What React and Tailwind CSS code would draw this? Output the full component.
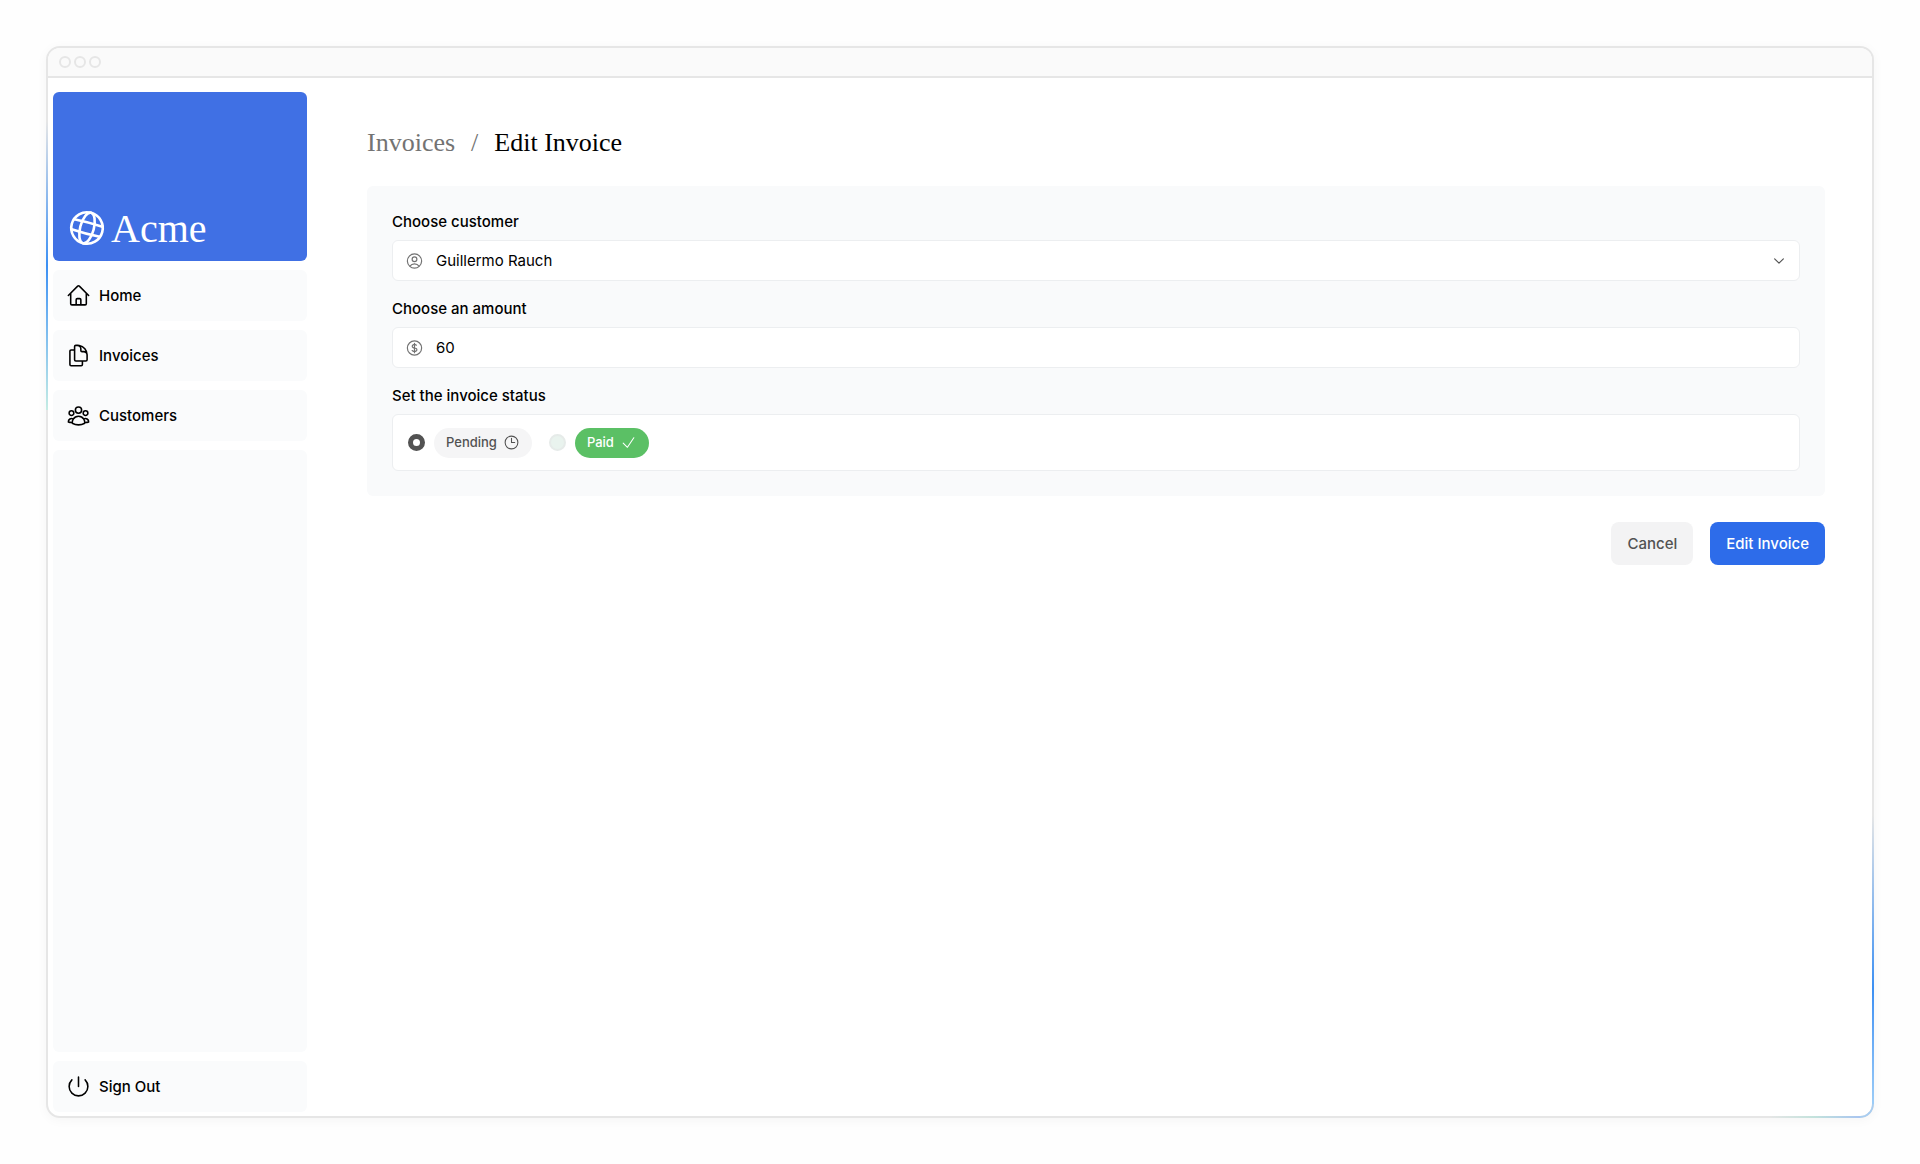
import React, { useState } from 'react';
import {
    HiOutlineHome,
    HiOutlineDocumentDuplicate,
    HiOutlineUserGroup,
    HiOutlinePower,
    HiOutlineUserCircle,
    HiOutlineCurrencyDollar,
    HiOutlineClock,
    HiOutlineCheck,
    HiOutlineChevronDown
} from 'react-icons/hi2';

const links = [
    { name: 'Home', href: '#home', icon: HiOutlineHome },
    { name: 'Invoices', href: '#invoices', icon: HiOutlineDocumentDuplicate },
    { name: 'Customers', href: '#customers', icon: HiOutlineUserGroup }
];

const customers = ['Guillermo Rauch', 'Lee Robinson', 'Delba de Oliveira'];

const GlobeIcon = ({ className }) => (
    <svg viewBox="0 0 24 24" fill="none" stroke="currentColor" strokeWidth="1.5" strokeLinecap="round" className={className} aria-hidden="true">
        <circle cx="12" cy="12" r="9" />
        <ellipse cx="12" cy="12" rx="3.9" ry="9" />
        <path d="M3.7 9Q12 8.5 20.3 9M3.7 15Q12 15.5 20.3 15" />
    </svg>
);

const TitleBar = () => (
    <div className="flex h-[30px] shrink-0 items-center gap-[3px] border-b-2 border-[#e6e6e6] bg-[#fafafa] pl-[11px]">
        <span className="size-3 rounded-full border-2 border-[#e6e6e6]" />
        <span className="size-3 rounded-full border-2 border-[#e6e6e6]" />
        <span className="size-3 rounded-full border-2 border-[#e6e6e6]" />
    </div>
);

// Coloured glow running along the window border
const BorderGlow = () => (
    <div className="pointer-events-none absolute -inset-[2px] overflow-hidden rounded-[14px]" aria-hidden="true">
        <div className="absolute top-[7%] left-0 h-[27%] w-[2px] bg-linear-to-b from-transparent via-[#3b8ff3] to-[#c5ece3]" />
        <div className="absolute right-0 bottom-[14px] h-[27%] w-[2px] bg-linear-to-b from-transparent via-[#3b8ff3] via-60% to-[#9cccf7]" />
        <div className="absolute right-0 bottom-0 size-[14px] rounded-br-[14px] border-r-2 border-b-2 border-[#a9cdf0]" />
        <div className="absolute right-[14px] bottom-0 h-[2px] w-[5%] bg-linear-to-r from-transparent via-[#c3e2dc] to-[#a9c5f0]" />
    </div>
);

const SideNav = () => (
    <aside className="flex w-[254px] shrink-0 flex-col gap-[9px]">
        <a href="#acme" className="flex h-[169px] items-end gap-[3px] rounded-md bg-[#4070e4] px-[13px] pb-3 text-white">
            <GlobeIcon className="size-[42px] rotate-15" />
            <span className="font-['Liberation_Serif',serif] text-[40px] leading-10">Acme</span>
        </a>
        <nav className="flex grow flex-col gap-[9px]">
            {links.map(({ name, href, icon: Icon }) => (
                <a key={name} href={href} className="flex h-[51px] items-center gap-2 rounded-md bg-[#fafbfc] px-[13px] font-medium">
                    <Icon className="size-[25px]" />
                    {name}
                </a>
            ))}
            <div className="grow rounded-md bg-[#fafbfc]" />
            <button type="button" className="flex h-[51px] items-center gap-2 rounded-md bg-[#fafbfc] px-[13px] font-medium">
                <HiOutlinePower className="size-[25px]" />
                Sign Out
            </button>
        </nav>
    </aside>
);

const InvoiceForm = () => {
    const [customer, setCustomer] = useState(customers[0]);
    const [amount, setAmount] = useState('60');
    const [status, setStatus] = useState('pending');

    return (
        <form onSubmit={(e) => e.preventDefault()}>
            <div className="rounded-md bg-[#f9fafb] p-[25px]">
                <label htmlFor="customer" className="mb-2 block font-medium">Choose customer</label>
                <div className="relative mb-[17px]">
                    <select
                        id="customer"
                        value={customer}
                        onChange={(e) => setCustomer(e.target.value)}
                        className="block h-[41px] w-full appearance-none rounded-md border border-[#eceef0] bg-white pl-[43px]"
                    >
                        {customers.map(c => <option key={c}>{c}</option>)}
                    </select>
                    <HiOutlineUserCircle className="pointer-events-none absolute top-1/2 left-[13px] size-[19px] -translate-y-1/2 text-neutral-500" />
                    <HiOutlineChevronDown className="pointer-events-none absolute top-1/2 right-[14px] size-[14px] -translate-y-1/2 stroke-2 text-neutral-600" />
                </div>

                <label htmlFor="amount" className="mb-2 block font-medium">Choose an amount</label>
                <div className="relative mb-[17px]">
                    <input
                        id="amount"
                        type="text"
                        inputMode="decimal"
                        value={amount}
                        onChange={(e) => setAmount(e.target.value)}
                        className="block h-[41px] w-full rounded-md border border-[#eceef0] bg-white pl-[43px]"
                    />
                    <HiOutlineCurrencyDollar className="pointer-events-none absolute top-1/2 left-[13px] size-[19px] -translate-y-1/2 text-neutral-500" />
                </div>

                <fieldset>
                    <legend className="mb-2 block font-medium">Set the invoice status</legend>
                    <div className="flex h-[57px] items-center gap-[17px] rounded-md border border-[#eceef0] bg-white px-[15px]">
                        <div className="flex items-center gap-[9px]">
                            <input
                                id="pending"
                                name="status"
                                type="radio"
                                checked={status === 'pending'}
                                onChange={() => setStatus('pending')}
                                className="size-[17px] appearance-none rounded-full border border-gray-200 bg-gray-100 checked:border-[5px] checked:border-[#525252] checked:bg-white"
                            />
                            <label htmlFor="pending" className="flex h-[30px] items-center gap-[6px] rounded-full bg-[#f5f5f6] px-3 text-[13px] font-medium text-neutral-600">
                                Pending <HiOutlineClock className="size-[17px]" />
                            </label>
                        </div>
                        <div className="flex items-center gap-[9px]">
                            <input
                                id="paid"
                                name="status"
                                type="radio"
                                checked={status === 'paid'}
                                onChange={() => setStatus('paid')}
                                className="size-[17px] appearance-none rounded-full border-2 border-[#e6ebe9] bg-[#e9f3ee] checked:border-[5px] checked:border-[#525252] checked:bg-white"
                            />
                            <label htmlFor="paid" className="flex h-[30px] items-center gap-[6px] rounded-full bg-[#5bc065] px-3 text-[13px] font-medium text-white">
                                Paid <HiOutlineCheck className="size-[17px]" />
                            </label>
                        </div>
                    </div>
                </fieldset>
            </div>
            <div className="mt-[26px] flex justify-end gap-[17px]">
                <a href="#invoices" className="flex h-[43px] items-center rounded-lg bg-[#f3f3f4] px-4 font-medium text-neutral-600">Cancel</a>
                <button type="submit" className="flex h-[43px] items-center rounded-lg bg-[#2d6cea] px-4 font-medium text-white">Edit Invoice</button>
            </div>
        </form>
    );
};

const App = () => (
    <div className="flex min-h-screen flex-col bg-[#fefefe] p-[46px] font-[Inter,sans-serif] text-[15px] leading-[21px] text-black">
        <div className="relative flex grow flex-col rounded-[14px] border-2 border-[#e6e6e6] bg-white shadow-[0_2px_12px_rgba(0,0,0,0.04)]">
            <div className="flex grow flex-col overflow-hidden rounded-xl">
                <TitleBar />
                <div className="flex grow pt-[14px] pr-[47px] pb-1 pl-[5px]">
                    <SideNav />
                    <main className="ml-[60px] grow pt-[34px]">
                        <nav aria-label="Breadcrumb" className="mb-[26px] flex font-['Liberation_Serif',serif] text-[26px] leading-[34px]">
                            <a href="#invoices" className="text-neutral-500">Invoices</a>
                            <span className="mx-4 text-neutral-500">/</span>
                            <a href="#edit" aria-current="page">Edit Invoice</a>
                        </nav>
                        <InvoiceForm />
                    </main>
                </div>
            </div>
            <BorderGlow />
        </div>
    </div>
);

export default App;
